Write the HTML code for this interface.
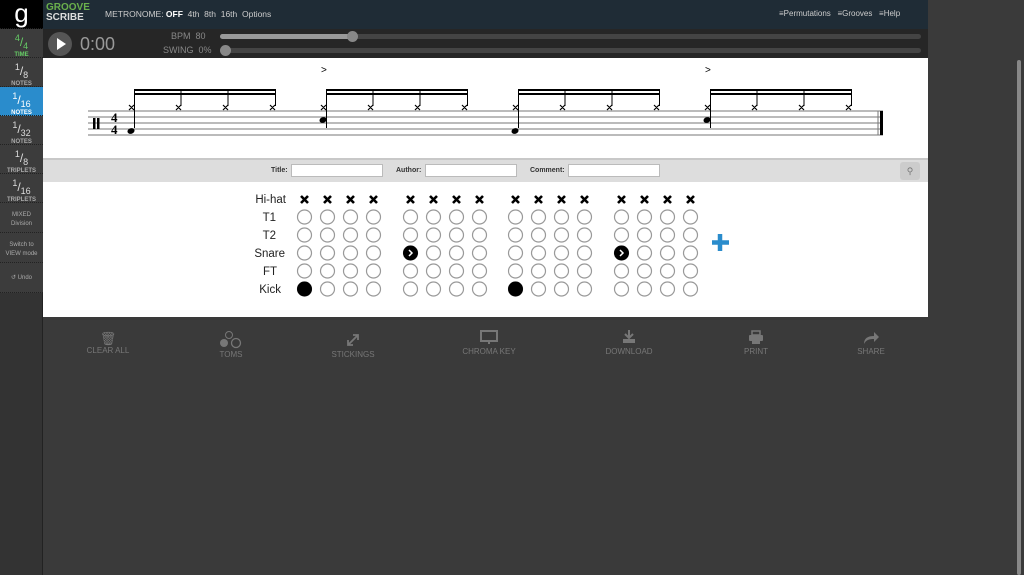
<!DOCTYPE html>
<html><head><meta charset="utf-8"><style>
*{margin:0;padding:0;box-sizing:border-box}
body{width:1024px;height:575px;background:#3a3a3a;font-family:"Liberation Sans",sans-serif;position:relative;overflow:hidden}
.a{position:absolute}
.side{left:0;top:0;width:43px;height:575px;background:#333;border-right:1px solid #222}
.sb{position:absolute;left:0;width:43px;background:#3c3c3c;border-bottom:1px dotted #222;color:#aaa;text-align:center;font-size:6px;font-weight:bold}
.fr{font-size:12px;color:#ddd;font-weight:normal;line-height:12px}
.fr sub{font-size:9px;vertical-align:-3px}
.fr sup{font-size:9px}
.hdr{left:43px;top:0;width:885px;height:29px;background:#1f2c36;color:#ccc;font-size:8.5px}
.pl{left:43px;top:29px;width:885px;height:29px;background:#262626}
.lbl{font-size:8px;color:#fff;font-weight:bold}
.ico{color:#777;font-size:8px;text-align:center}
</style></head><body>
<div class="a side">
 <div class="sb" style="top:0;height:29px;background:#000;color:#fff;font-size:26px;font-weight:normal;line-height:26px">g</div>
 <div class="sb" style="top:29px;height:29px;padding-top:3px"><div class="fr" style="color:#6c6"><sup>4</sup>/<sub>4</sub></div><div style="color:#6c6">TIME</div></div>
 <div class="sb" style="top:58px;height:29px;padding-top:3px"><div class="fr"><sup>1</sup>/<sub>8</sub></div>NOTES</div>
 <div class="sb" style="top:87px;height:29px;padding-top:3px;background:#2a8ccc;color:#fff"><div class="fr" style="color:#fff"><sup>1</sup>/<sub>16</sub></div>NOTES</div>
 <div class="sb" style="top:116px;height:29px;padding-top:3px"><div class="fr"><sup>1</sup>/<sub>32</sub></div>NOTES</div>
 <div class="sb" style="top:145px;height:29px;padding-top:3px"><div class="fr"><sup>1</sup>/<sub>8</sub></div>TRIPLETS</div>
 <div class="sb" style="top:174px;height:29px;padding-top:3px"><div class="fr"><sup>1</sup>/<sub>16</sub></div>TRIPLETS</div>
 <div class="sb" style="top:203px;height:30px;padding-top:8px;line-height:9px;font-weight:normal">MIXED<br>Division</div>
 <div class="sb" style="top:233px;height:30px;padding-top:8px;line-height:9px;font-weight:normal">Switch to<br>VIEW mode</div>
 <div class="sb" style="top:263px;height:30px;padding-top:11px;font-weight:normal">↺ Undo</div>
</div>
<div class="a hdr">
 <div class="a" style="left:3px;top:3px;font-size:10px;font-weight:bold;line-height:10px;color:#6ab04c">GROOVE<br><span style="color:#ddd">SCRIBE</span></div>
 <div class="a" style="left:62px;top:9px">METRONOME: <b style="color:#fff">OFF</b>&nbsp; 4th&nbsp; 8th&nbsp; 16th&nbsp; Options</div>
 <div class="a" style="left:736px;top:9px;font-size:8px">≡Permutations&nbsp;&nbsp; ≡Grooves&nbsp;&nbsp; ≡Help</div>
</div>
<div class="a pl">
 <div class="a" style="left:5px;top:3px;width:24px;height:24px;border-radius:50%;background:#555"></div>
 <div class="a" style="left:14px;top:9px;width:0;height:0;border-left:9px solid #fff;border-top:6px solid transparent;border-bottom:6px solid transparent"></div>
 <div class="a" style="left:37px;top:5px;font-size:18px;color:#999">0:00</div>
 <div class="a" style="left:128px;top:2px;font-size:9px;color:#888">BPM&nbsp; 80</div>
 <div class="a" style="left:120px;top:16px;font-size:9px;color:#888">SWING&nbsp; 0%</div>
 <div class="a" style="left:177px;top:5px;width:701px;height:5px;border-radius:3px;background:#444"></div>
 <div class="a" style="left:177px;top:5px;width:132px;height:5px;border-radius:3px;background:#999"></div>
 <div class="a" style="left:304px;top:2px;width:11px;height:11px;border-radius:50%;background:#888"></div>
 <div class="a" style="left:177px;top:19px;width:701px;height:5px;border-radius:3px;background:#444"></div>
 <div class="a" style="left:177px;top:16px;width:11px;height:11px;border-radius:50%;background:#888"></div>
</div>
<div class="a" style="left:43px;top:58px;width:885px;height:100px;background:#fff"></div>
<svg class="a" style="left:0;top:0" width="1024" height="160">
 <g stroke="#777" stroke-width="1">
  <line x1="88" y1="111" x2="883" y2="111"/><line x1="88" y1="117" x2="883" y2="117"/><line x1="88" y1="123" x2="883" y2="123"/><line x1="88" y1="129" x2="883" y2="129"/><line x1="88" y1="135" x2="883" y2="135"/>
  <line x1="878" y1="111" x2="878" y2="135"/>
 </g>
 <rect x="880" y="111" width="3" height="24" fill="#000"/>
 <rect x="93" y="118" width="2.5" height="11" fill="#000"/><rect x="97" y="118" width="2.5" height="11" fill="#000"/>
 <text x="111" y="122" font-family="Liberation Serif" font-size="13" font-weight="bold">4</text>
 <text x="111" y="134" font-family="Liberation Serif" font-size="13" font-weight="bold">4</text>
 <g id="grp">
  <rect x="134" y="89" width="142" height="2" fill="#000"/><rect x="134" y="93" width="142" height="2" fill="#000"/>
  <g stroke="#000" stroke-width="1"><line x1="134.5" y1="89" x2="134.5" y2="128"/><line x1="181" y1="89" x2="181" y2="106"/><line x1="228" y1="89" x2="228" y2="106"/><line x1="275.5" y1="89" x2="275.5" y2="106"/></g>
  <g stroke="#000" stroke-width="1.2" fill="none">
   <path d="M129 105l5 5M134 105l-5 5M176 105l5 5M181 105l-5 5M223 105l5 5M228 105l-5 5M270 105l5 5M275 105l-5 5"/>
  </g>
 </g>
 <ellipse cx="131" cy="131" rx="3.6" ry="2.8" fill="#000" transform="rotate(-20 131 131)"/>
 <use href="#grp" x="192"/><use href="#grp" x="384"/><use href="#grp" x="576"/>
 <ellipse cx="323" cy="120" rx="3.6" ry="2.8" fill="#000" transform="rotate(-20 323 120)"/>
 <ellipse cx="515" cy="131" rx="3.6" ry="2.8" fill="#000" transform="rotate(-20 515 131)"/>
 <ellipse cx="707" cy="120" rx="3.6" ry="2.8" fill="#000" transform="rotate(-20 707 120)"/>
 <text x="321" y="73" font-size="10">&gt;</text><text x="705" y="73" font-size="10">&gt;</text>
</svg>
<div class="a" style="left:43px;top:158px;width:885px;height:24px;background:#ddd;border-top:2px solid #c8c8c8"></div>
<div class="a lbl" style="left:271px;top:167px;color:#333;font-size:7px">Title:</div>
<div class="a" style="left:291px;top:164px;width:92px;height:13px;background:#fff;border:1px solid #bbb"></div>
<div class="a lbl" style="left:396px;top:167px;color:#333;font-size:7px">Author:</div>
<div class="a" style="left:425px;top:164px;width:92px;height:13px;background:#fff;border:1px solid #bbb"></div>
<div class="a lbl" style="left:530px;top:167px;color:#333;font-size:7px">Comment:</div>
<div class="a" style="left:568px;top:164px;width:92px;height:13px;background:#fff;border:1px solid #bbb"></div>
<div class="a" style="left:900px;top:162px;width:20px;height:18px;background:#ccc;border-radius:3px;color:#777;font-size:9px;text-align:center;line-height:18px">⚲</div>
<div class="a" style="left:43px;top:182px;width:885px;height:135px;background:#fff"></div>
<svg class="a" style="left:0;top:182px" width="930" height="135">
 <g font-size="11.5" fill="#222" text-anchor="end">
  <text x="286" y="21">Hi-hat</text><text x="276" y="39">T1</text><text x="276" y="57">T2</text><text x="285" y="75">Snare</text><text x="277" y="93">FT</text><text x="281" y="111">Kick</text>
 </g>
 <g id="col">
  <path d="M301 14l7 7M308 14l-7 7" stroke="#000" stroke-width="2.6"/>
  <g fill="none" stroke="#999" stroke-width="1.2">
   <circle cx="304.5" cy="35" r="7"/><circle cx="304.5" cy="53" r="7"/><circle cx="304.5" cy="71" r="7"/><circle cx="304.5" cy="89" r="7"/><circle cx="304.5" cy="107" r="7"/>
  </g>
 </g>
 <use href="#col" x="23"/><use href="#col" x="46"/><use href="#col" x="69"/>
 <use href="#col" x="106"/><use href="#col" x="129"/><use href="#col" x="152"/><use href="#col" x="175"/>
 <use href="#col" x="211"/><use href="#col" x="234"/><use href="#col" x="257"/><use href="#col" x="280"/>
 <use href="#col" x="317"/><use href="#col" x="340"/><use href="#col" x="363"/><use href="#col" x="386"/>
 <circle cx="304.5" cy="107" r="7.5" fill="#000"/><circle cx="515.5" cy="107" r="7.5" fill="#000"/>
 <circle cx="410.5" cy="71" r="7.5" fill="#000"/><circle cx="621.5" cy="71" r="7.5" fill="#000"/>
 <path d="M409 68l3 3-3 3M620 68l3 3-3 3" stroke="#fff" stroke-width="1.5" fill="none"/>
 <path d="M720 52v17M712 60.5h17" stroke="#2a8ccc" stroke-width="4.5"/>
</svg>
<div class="a ico" style="left:80px;top:331px;width:56px"><div style="font-size:13px;line-height:15px">🗑</div>CLEAR ALL</div>
<svg class="a" style="left:218px;top:330px" width="26" height="30"><circle cx="11" cy="5" r="3.5" fill="none" stroke="#777"/><circle cx="6" cy="13" r="4" fill="#777"/><circle cx="18" cy="13" r="4.5" fill="none" stroke="#777" stroke-width="1.3"/></svg>
<div class="a ico" style="left:210px;top:350px;width:42px">TOMS</div>
<svg class="a" style="left:345px;top:332px" width="16" height="16"><path d="M3 13l10-10M8 3h5v5M3 8v5h5" stroke="#777" stroke-width="1.8" fill="none"/></svg>
<div class="a ico" style="left:323px;top:350px;width:60px">STICKINGS</div>
<svg class="a" style="left:480px;top:330px" width="18" height="16"><rect x="1" y="1" width="16" height="10" fill="none" stroke="#777" stroke-width="2"/><rect x="8" y="11" width="2" height="3" fill="#777"/></svg>
<div class="a ico" style="left:455px;top:347px;width:68px">CHROMA KEY</div>
<svg class="a" style="left:621px;top:329px" width="16" height="16"><path d="M8 1v7M4 5l4 4 4-4" stroke="#777" stroke-width="2" fill="none"/><rect x="2" y="10" width="12" height="4" fill="#777"/></svg>
<div class="a ico" style="left:600px;top:347px;width:58px">DOWNLOAD</div>
<svg class="a" style="left:748px;top:330px" width="16" height="16"><rect x="4" y="1" width="8" height="4" fill="none" stroke="#777" stroke-width="1.5"/><rect x="1" y="5" width="14" height="6" rx="1" fill="#777"/><rect x="4" y="10" width="8" height="4" fill="#777"/></svg>
<div class="a ico" style="left:736px;top:347px;width:40px">PRINT</div>
<svg class="a" style="left:862px;top:329px" width="18" height="16"><path d="M2 15c0-6 4-8 10-8V3l5 5-5 5V10c-5 0-8 1-10 5z" fill="#777"/></svg>
<div class="a ico" style="left:850px;top:347px;width:42px">SHARE</div>
<div class="a" style="left:1017px;top:60px;width:4px;height:515px;background:#888;border-radius:2px"></div>
</body></html>
